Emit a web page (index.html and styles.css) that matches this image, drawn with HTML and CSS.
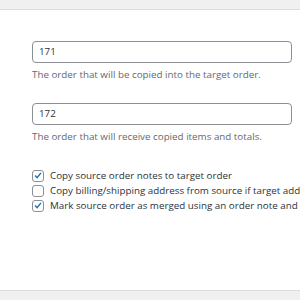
FILE: index.html
```html
<!DOCTYPE html>
<html>
<head>
<meta charset="utf-8">
<link rel="stylesheet" href="styles.css">
</head>
<body>
<div class="topbar"></div>
<div class="panel">
  <div class="field">
    <div class="input">171</div>
    <p class="desc">The order that will be copied into the target order.</p>
  </div>
  <div class="field">
    <div class="input">172</div>
    <p class="desc">The order that will receive copied items and totals.</p>
  </div>
  <div class="checks">
    <div class="check"><span class="box"><svg viewBox="0 0 11 11" width="11" height="11"><path d="M2.3 5.6 L4.5 7.9 L8.8 2.6" fill="none" stroke="#2271b1" stroke-width="1.6"/></svg></span><span>Copy source order notes to target order</span></div>
    <div class="check"><span class="box"></span><span>Copy billing/shipping address from source if target address is empty</span></div>
    <div class="check"><span class="box"><svg viewBox="0 0 11 11" width="11" height="11"><path d="M2.3 5.6 L4.5 7.9 L8.8 2.6" fill="none" stroke="#2271b1" stroke-width="1.6"/></svg></span><span>Mark source order as merged using an order note and status</span></div>
  </div>
</div>
<div class="bottombar"></div>
</body>
</html>
```
FILE: styles.css
```css
html, body {
  margin: 0;
  padding: 0;
  width: 300px;
  height: 300px;
  overflow: hidden;
  background: #f0f0f1;
  font-family: "Open Sans", "Noto Sans", sans-serif;
}
.topbar {
  height: 9px;
  background: #f0f0f1;
  border-bottom: 1px solid #dcdcde;
}
.panel {
  background: #fff;
  height: 281px;
  border-bottom: 1px solid #dcdcde;
  padding: 31px 0 0 32px;
  box-sizing: border-box;
  overflow: hidden;
  white-space: nowrap;
}
.field {
  margin-bottom: 20px;
}
.input {
  width: 260px;
  height: 22px;
  box-sizing: border-box;
  border: 1px solid #8c8f94;
  border-radius: 4px;
  padding-left: 6px;
  font-size: 9.8px;
  line-height: 20px;
  color: #2c3338;
}
.desc {
  margin: 4px 0 0 0;
  font-size: 9.8px;
  line-height: 16px;
  color: #646970;
}
.checks {
  margin-top: 23px;
}
.check {
  display: flex;
  align-items: center;
  height: 15px;
  font-size: 9.8px;
  color: #2c3338;
}
.box {
  width: 12px;
  height: 12px;
  box-sizing: border-box;
  border: 1px solid #8c8f94;
  border-radius: 3px;
  margin-right: 6px;
  flex: none;
  display: flex;
  align-items: center;
  justify-content: center;
}
.box svg {
  display: block;
}
```
